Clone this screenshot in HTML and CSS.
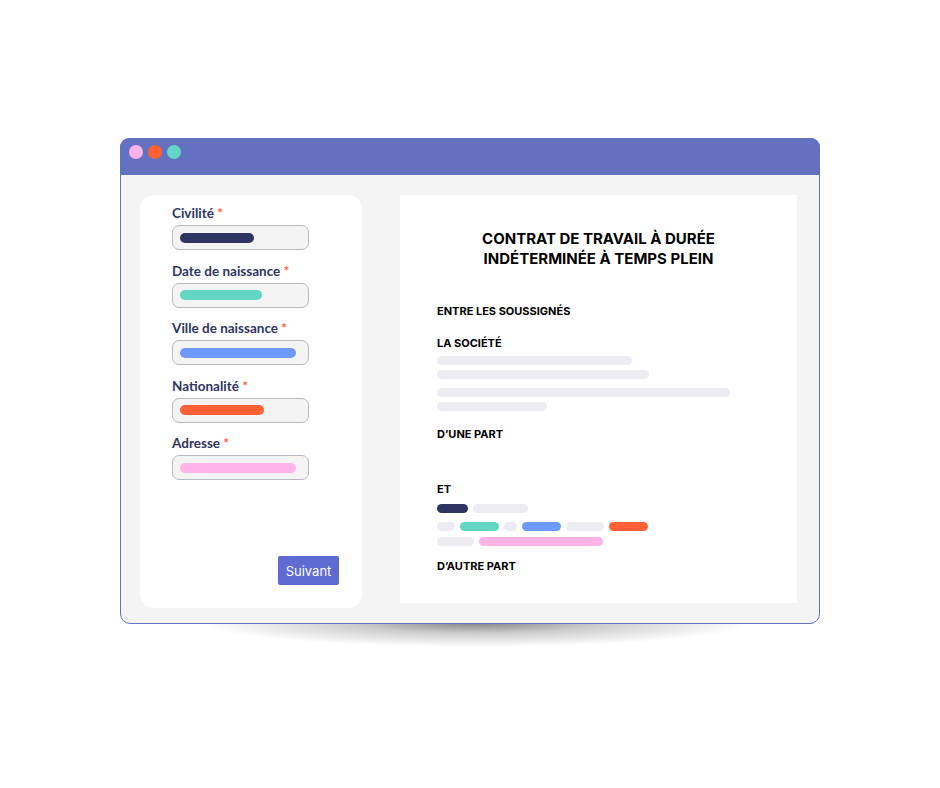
FILE: index.html
```html
<!DOCTYPE html>
<html lang="fr">
<head>
<meta charset="utf-8">
<title>Contrat</title>
<link rel="stylesheet" href="styles.css">
</head>
<body>
<div class="window">
  <div class="titlebar">
    <span class="dot dot-pink"></span>
    <span class="dot dot-orange"></span>
    <span class="dot dot-teal"></span>
  </div>
  <div class="content">
    <div class="card">
      <div class="field">
        <div class="label">Civilité <span class="req">*</span></div>
        <div class="input"><span class="fill fill-navy w74"></span></div>
      </div>
      <div class="field">
        <div class="label">Date de naissance <span class="req">*</span></div>
        <div class="input"><span class="fill fill-teal w82"></span></div>
      </div>
      <div class="field">
        <div class="label">Ville de naissance <span class="req">*</span></div>
        <div class="input"><span class="fill fill-blue w116"></span></div>
      </div>
      <div class="field">
        <div class="label">Nationalité <span class="req">*</span></div>
        <div class="input"><span class="fill fill-orange w84"></span></div>
      </div>
      <div class="field">
        <div class="label">Adresse <span class="req">*</span></div>
        <div class="input"><span class="fill fill-pink w116"></span></div>
      </div>
      <button class="btn">Suivant</button>
    </div>
    <div class="doc">
      <h1 class="doc-title">CONTRAT DE TRAVAIL À DURÉE<br>INDÉTERMINÉE À TEMPS PLEIN</h1>
      <div class="h h-entre">ENTRE LES SOUSSIGNÉS</div>
      <div class="h h-soc">LA SOCIÉTÉ</div>
      <div class="lines">
        <span class="bar gray b195"></span>
        <span class="bar gray b212 m5"></span>
        <span class="bar gray b293 m9"></span>
        <span class="bar gray b110 m5"></span>
      </div>
      <div class="h h-une">D’UNE PART</div>
      <div class="h h-et">ET</div>
      <div class="row r1">
        <span class="bar navy b31"></span>
        <span class="bar gray b55"></span>
      </div>
      <div class="row r2">
        <span class="bar gray b18"></span>
        <span class="bar teal b39"></span>
        <span class="bar gray b13"></span>
        <span class="bar blue b39"></span>
        <span class="bar gray b38"></span>
        <span class="bar orange b39"></span>
      </div>
      <div class="row r3">
        <span class="bar gray b37"></span>
        <span class="bar pink b124"></span>
      </div>
      <div class="h h-autre">D’AUTRE PART</div>
    </div>
  </div>
</div>
</body>
</html>
```
FILE: styles.css
```css
* { box-sizing: border-box; }
html { background: #ffffff; }
html, body { margin: 0; padding: 0; }
body { width: 940px; height: 788px; overflow: hidden; font-family: "Lato", "Open Sans", sans-serif; }

.window {
  position: relative;
  margin: 138px 0 0 120px;
  width: 700px;
  height: 486px;
  border: 1px solid #6470c0;
  border-radius: 10px;
  background: #f4f4f4;
}
.window::before {
  content: "";
  position: absolute;
  left: 80px;
  right: 68px;
  top: 458px;
  height: 50px;
  background: radial-gradient(ellipse 50% 50% at 50% 50%, rgba(0,0,0,0.5) 0%, rgba(0,0,0,0.2) 45%, rgba(0,0,0,0) 100%);
  z-index: -1;
}
.titlebar {
  height: 37px;
  background: #6470c0;
  border-radius: 9px 9px 0 0;
  display: flex;
  align-items: center;
  gap: 5px;
  padding: 0 0 9px 9px;
  margin: -1px -1px 0 -1px;
}
.dot { width: 14px; height: 14px; border-radius: 50%; display: block; }
.dot-pink { background: #ffb3e6; }
.dot-orange { background: #ff6035; }
.dot-teal { background: #63d6c4; }

.content {
  display: flex;
  align-items: flex-start;
  padding: 20px 0 0 19px;
  gap: 38px;
}
.card {
  width: 222px;
  height: 413px;
  background: #ffffff;
  border-radius: 14px;
  padding: 10px 23px 23px 32px;
  display: flex;
  flex-direction: column;
}
.field { margin-bottom: 12.5px; }
.label {
  font-size: 13.5px;
  line-height: 16px;
  font-weight: 700;
  color: #2e3562;
  margin-bottom: 4px;
}
.req { color: #ff6035; }
.input {
  width: 137px;
  height: 25px;
  border: 1px solid #b9b9c2;
  border-radius: 7px;
  background: #f4f4f4;
  display: flex;
  align-items: center;
  padding-left: 7px;
}
.fill { display: block; height: 10px; border-radius: 5px; }
.fill-navy { background: #2e3562; }
.fill-teal { background: #63d6c4; }
.fill-blue { background: #6e99ff; }
.fill-orange { background: #ff6035; }
.fill-pink { background: #ffb3e6; }
.w74 { width: 74px; }
.w82 { width: 82px; }
.w84 { width: 84px; }
.w116 { width: 116px; }

.btn {
  margin-top: auto;
  align-self: flex-end;
  width: 61px;
  height: 29px;
  border: none;
  border-radius: 2px;
  background: #5f6ad2;
  color: #ffffff;
  font-family: "Inter", "Open Sans", sans-serif;
  font-size: 13px;
  padding: 0;
}

.doc {
  width: 397px;
  height: 408px;
  background: #ffffff;
  padding: 34px 0 0 37px;
  display: flex;
  flex-direction: column;
  align-items: flex-start;
  font-family: "Inter", "Open Sans", sans-serif;
  color: #000000;
}
.doc-title {
  margin: 0 0 0 -37px;
  width: 397px;
  text-align: center;
  font-size: 15px;
  line-height: 20px;
  font-weight: 700;
  letter-spacing: 0;
}
.h { font-size: 11px; line-height: 14px; font-weight: 700; }
.h-entre { margin-top: 35px; }
.h-soc { margin-top: 18px; }
.lines { display: flex; flex-direction: column; margin-top: 6px; }
.h-une { margin-top: 16px; }
.h-et { margin-top: 41px; }
.row { display: flex; gap: 5px; }
.r1 { margin-top: 8px; }
.r2 { margin-top: 9px; }
.r3 { margin-top: 6px; }
.h-autre { margin-top: 13px; }

.bar { display: block; height: 9px; border-radius: 5px; }
.m5 { margin-top: 5px; }
.m9 { margin-top: 9px; }
.gray { background: #ececf2; }
.navy { background: #2e3562; }
.teal { background: #63d6c4; }
.blue { background: #6e99ff; }
.orange { background: #ff6035; }
.pink { background: #ffb3e6; }
.b195 { width: 195px; }
.b212 { width: 212px; }
.b293 { width: 293px; }
.b110 { width: 110px; }
.b31 { width: 31px; }
.b55 { width: 55px; }
.b18 { width: 18px; }
.b39 { width: 39px; }
.b13 { width: 13px; }
.b38 { width: 38px; }
.b37 { width: 37px; }
.b124 { width: 124px; }
```
